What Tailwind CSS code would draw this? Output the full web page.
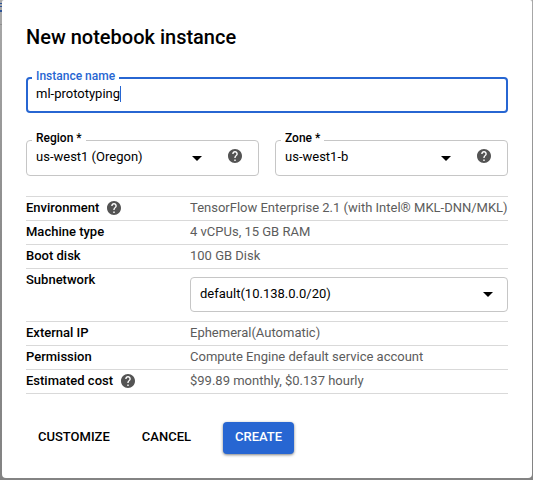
<!DOCTYPE html>
<html lang="en">
<head>
<meta charset="utf-8">
<meta name="viewport" content="width=device-width, initial-scale=1">
<title>New notebook instance</title>
<script src="https://cdn.jsdelivr.net/npm/@tailwindcss/browser@4"></script>
</head>
<body class="relative min-h-screen bg-linear-to-b from-[#a9a9a9] via-[#8b8b8b] to-[#838383] pr-px pb-0.5 pl-0.5 font-[Roboto,'Liberation_Sans',sans-serif] text-[13px] leading-5 text-black">
<svg class="hidden" aria-hidden="true">
  <symbol id="help" viewBox="2 2 20 20"><path fill="currentColor" d="M12 2C6.480 2 2 6.480 2 12s4.480 10 10 10 10-4.480 10-10S17.520 2 12 2zm1 17h-2v-2h2v2zm2.070-7.750l-.9.920C13.450 12.900 13 13.500 13 15h-2v-.5c0-1.100.45-2.100 1.170-2.830l1.240-1.260c.37-.36.59-.86.59-1.410 0-1.100-.9-2-2-2s-2 .9-2 2H8c0-2.210 1.790-4 4-4s4 1.790 4 4c0 .88-.36 1.680-.93 2.250z"/></symbol>
  <symbol id="arrow" viewBox="0 0 10 5"><path fill="currentColor" d="M0 0h10L5 5z"/></symbol>
</svg>
<!-- Sliver of the dimmed page left of the dialog -->
<svg class="absolute top-0 left-0 h-7 w-0.5" viewBox="0 0 2 28" aria-hidden="true"><path fill="#2f5597" d="M0 3h2v1H0zM0 6h2v1H0zM0 10h2v2H0z"/><path fill="#8f8f8f" d="M0 24h2v1H0z"/></svg>
<main role="dialog" aria-labelledby="title" class="rounded-b rounded-t-xs bg-white px-6 pt-[23px] pb-6">
  <h1 id="title" class="text-xl leading-7 font-medium">New notebook instance</h1>
  <form>
    <div class="relative mt-[26px] flex h-9 items-center rounded border-2 border-[#2766d2] px-2 pb-0.5">
      <label for="name" class="absolute -top-[11px] left-1 bg-white px-1 text-xs leading-4 font-medium text-[#2766d2]">Instance name</label>
      <input id="name" type="text" value="ml-prototyping" class="field-sizing-content max-w-full outline-none">
      <span class="h-4 w-px bg-[#2766d2]"></span>
    </div>

    <div class="mt-[27px] grid grid-cols-2 gap-4">
      <div class="relative flex h-9 items-center rounded border border-[#c6c6c6]">
        <label for="region" class="absolute -top-[11px] left-[5px] bg-white px-1 text-xs leading-4 font-medium">Region *</label>
        <select id="region" class="h-full min-w-0 flex-1 appearance-none pr-6 pb-0.5 pl-[9px] outline-none"><option>us-west1 (Oregon)</option></select>
        <svg class="pointer-events-none -ml-5 h-[5px] w-2.5"><use href="#arrow"/></svg>
        <button type="button" aria-label="About regions" class="mr-4 ml-[26px] pb-1 text-[#545454]"><svg class="size-3.5"><use href="#help"/></svg></button>
      </div>
      <div class="relative flex h-9 items-center rounded border border-[#c6c6c6]">
        <label for="zone" class="absolute -top-[11px] left-[5px] bg-white px-1 text-xs leading-4 font-medium">Zone *</label>
        <select id="zone" class="h-full min-w-0 flex-1 appearance-none pr-6 pb-0.5 pl-[9px] outline-none"><option>us-west1-b</option></select>
        <svg class="pointer-events-none -ml-5 h-[5px] w-2.5"><use href="#arrow"/></svg>
        <button type="button" aria-label="About zones" class="mr-4 ml-[26px] pb-1 text-[#545454]"><svg class="size-3.5"><use href="#help"/></svg></button>
      </div>
    </div>

    <table class="mt-5 w-full border-collapse text-left leading-[22px] text-[#5c5c5c] [&_td]:p-0 [&_td]:align-top [&_th]:w-41 [&_th]:p-0 [&_th]:align-top [&_th]:font-medium [&_th]:text-black [&_tr]:h-6 [&_tr]:border-y [&_tr]:border-[#d9d9d9]">
      <tbody>
        <tr><th scope="row"><div class="flex items-center gap-2">Environment <button type="button" aria-label="About the environment" class="text-[#545454]"><svg class="size-3.5"><use href="#help"/></svg></button></div></th><td class="whitespace-nowrap">TensorFlow Enterprise 2.1 (with Intel® MKL-DNN/MKL)</td></tr>
        <tr><th scope="row">Machine type</th><td>4 vCPUs, 15 GB RAM</td></tr>
        <tr><th scope="row">Boot disk</th><td>100 GB Disk</td></tr>
        <tr>
          <th scope="row"><label for="subnet">Subnetwork</label></th>
          <td>
            <div class="mt-2 mb-[9px] flex h-[35px] items-center rounded border border-[#c6c6c6] text-black">
              <select id="subnet" class="h-full min-w-0 flex-1 appearance-none pr-6 pb-0.5 pl-[9px] outline-none"><option>default(10.138.0.0/20)</option></select>
              <svg class="pointer-events-none mr-3.5 -ml-6 h-[5px] w-2.5"><use href="#arrow"/></svg>
            </div>
          </td>
        </tr>
        <tr><th scope="row">External IP</th><td>Ephemeral(Automatic)</td></tr>
        <tr><th scope="row">Permission</th><td>Compute Engine default service account</td></tr>
        <tr><th scope="row"><div class="flex items-center gap-2">Estimated cost <button type="button" aria-label="About the estimated cost" class="text-[#545454]"><svg class="size-3.5"><use href="#help"/></svg></button></div></th><td>$99.89 monthly, $0.137 hourly</td></tr>
      </tbody>
    </table>

    <div class="mt-7 flex items-center gap-2 font-medium">
      <button type="button" class="h-8 px-3 pb-0.5">CUSTOMIZE</button>
      <button type="button" class="h-8 px-3 pb-0.5">CANCEL</button>
      <button type="submit" class="ml-3 h-8 rounded bg-[#2766d2] px-3 pb-0.5 text-white shadow-[0_1px_3px_rgba(0,0,0,0.5)]">CREATE</button>
    </div>
  </form>
</main>
</body>
</html>
